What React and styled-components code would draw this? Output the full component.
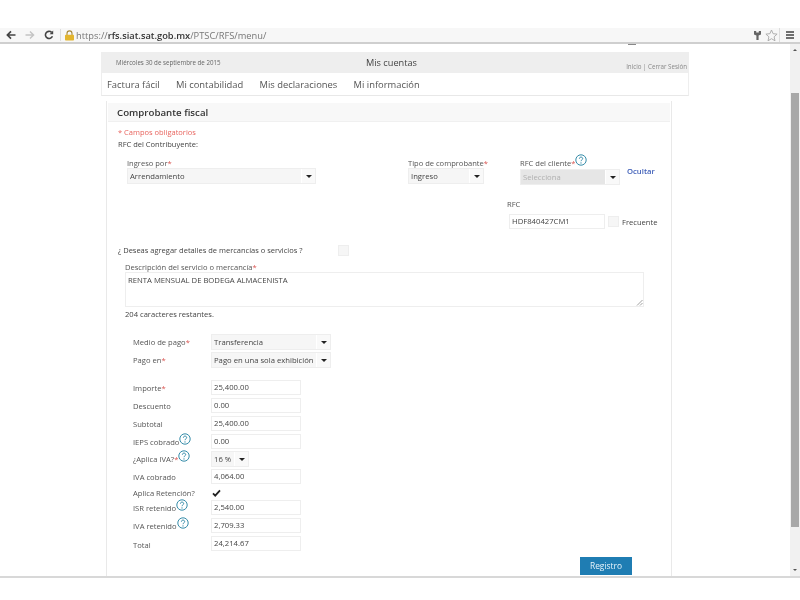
import React from "react";
import styled, { createGlobalStyle } from "styled-components";

const GlobalStyle = createGlobalStyle`
  html, body { margin: 0; padding: 0; background: #fff; overflow: hidden; }
  * { box-sizing: border-box; }
`;

const HelpIcon = ({ size = 12 }) => (
  <HelpSvg width={size} height={size} viewBox="0 0 12 12">
    <circle cx="6" cy="6" r="5.2" fill="none" stroke="#1f7f9f" strokeWidth="0.9" />
    <path d="M4.4 4.7c0-1 .7-1.6 1.6-1.6s1.7.6 1.7 1.5c0 1.2-1.7 1.3-1.7 2.6" fill="none" stroke="#1f7f9f" strokeWidth="0.9" />
    <circle cx="6" cy="8.9" r="0.6" fill="#1f7f9f" />
  </HelpSvg>
);

const SelectBox = ({ width, height = 16, disabled, children }) => (
  <Select $width={width} $height={height} $disabled={disabled}>
    <SelectValue $disabled={disabled}>{children}</SelectValue>
    <SelectArrow />
  </Select>
);

const AmountRow = ({ label, required, help, value, gap = 3, drop }) => (
  <Row $gap={gap}>
    <RowLabel $drop={drop}>
      {label}
      {required && <Req>*</Req>}
      {help && <HelpIcon />}
    </RowLabel>
    <Input $width={90}>{value}</Input>
  </Row>
);

const App = () => {
  return (
    <Page>
      <GlobalStyle />
      <TopBlank />
      <Toolbar>
        <NavIcons>
          <svg width="10" height="10" viewBox="0 0 10 10">
            <path d="M9.5 5H2M5 1.4 1.4 5 5 8.6" fill="none" stroke="#444" strokeWidth="1.7" />
          </svg>
          <svg width="10" height="10" viewBox="0 0 10 10">
            <path d="M.5 5H8M5 1.4 8.6 5 5 8.6" fill="none" stroke="#c4c4c4" strokeWidth="1.4" />
          </svg>
          <svg width="10" height="10" viewBox="0 0 10 10">
            <path d="M8.4 6.2A3.6 3.6 0 1 1 7.6 2.4" fill="none" stroke="#444" strokeWidth="1.6" />
            <path d="M9.2 .6v3.6H5.6z" fill="#444" />
          </svg>
        </NavIcons>
        <ToolbarDivider />
        <svg width="11" height="11" viewBox="0 0 11 11">
          <path d="M3 5V3.4a2.5 2.5 0 0 1 5 0V5" fill="none" stroke="#a88a3a" strokeWidth="1.1" />
          <rect x="1" y="4.8" width="9" height="5.8" rx="0.8" fill="#e3b52e" />
        </svg>
        <Url>
          https://<strong>rfs.siat.sat.gob.mx</strong>/PTSC/RFS/menu/
        </Url>
        <ToolbarRight>
          <svg width="9" height="11" viewBox="0 0 9 11">
            <path d="M1 1h2.2v1.4h2.6V1H8v3.4L5.6 5.6V10H3.4V5.6L1 4.4z" fill="#666" />
          </svg>
          <StarIcon width="13" height="13" viewBox="0 0 13 13">
            <path d="M6.5 1 8.1 4.7l4 .4-3 2.7.9 4-3.5-2.1-3.5 2.1.9-4-3-2.7 4-.4z" fill="none" stroke="#a8a8a8" strokeWidth="0.9" />
          </StarIcon>
          <MenuDivider />
          <svg width="8" height="8" viewBox="0 0 8 8">
            <path d="M0 1h8M0 4h8M0 7h8" stroke="#444" strokeWidth="1.5" />
          </svg>
        </ToolbarRight>
      </Toolbar>

      <Viewport>
        <Main>
          <Header>
            <DateText>Miércoles 30 de septiembre de 2015</DateText>
            <HeaderTitle>Mis cuentas</HeaderTitle>
            <SessionLinks>Inicio | Cerrar Sesión</SessionLinks>
          </Header>
          <Nav>
            <NavItem>Factura fácil</NavItem>
            <NavItem>Mi contabilidad</NavItem>
            <NavItem>Mis declaraciones</NavItem>
            <NavItem>Mi información</NavItem>
          </Nav>

          <Card>
            <CardTitle>Comprobante fiscal</CardTitle>
            <Body>
              <Required>* Campos obligatorios</Required>
              <Taxpayer>RFC del Contribuyente:</Taxpayer>

              <TopFields>
                <Field $width={281}>
                  <FieldLabel>
                    Ingreso por<Req>*</Req>
                  </FieldLabel>
                  <SelectBox width={189}>Arrendamiento</SelectBox>
                </Field>
                <Field $width={112}>
                  <FieldLabel>
                    Tipo de comprobante<Req>*</Req>
                  </FieldLabel>
                  <SelectBox width={76}>Ingreso</SelectBox>
                </Field>
                <ClientField $width={107}>
                  <FieldLabel>
                    RFC del cliente<Req>*</Req>
                    <HelpIcon />
                  </FieldLabel>
                  <SelectBox width={100} disabled>
                    Selecciona
                  </SelectBox>
                </ClientField>
                <HideLink>Ocultar</HideLink>
              </TopFields>

              <ClientRfc>
                <ClientRfcLabel>RFC</ClientRfcLabel>
                <ClientRfcRow>
                  <Input $width={96}>HDF840427CM1</Input>
                  <CheckBox />
                  <span>Frecuente</span>
                </ClientRfcRow>
              </ClientRfc>

              <DetailsRow>
                <DetailsText>¿ Deseas agregar detalles de mercancías o servicios ?</DetailsText>
                <CheckBox />
              </DetailsRow>

              <Description>
                <FieldLabel>
                  Descripción del servicio o mercancía<Req>*</Req>
                </FieldLabel>
                <TextArea>
                  RENTA MENSUAL DE BODEGA ALMACENISTA
                  <Grip width="7" height="7" viewBox="0 0 7 7">
                    <path d="M1 6.5 6.5 1M4 6.5 6.5 4" stroke="#888" strokeWidth="0.8" />
                  </Grip>
                </TextArea>
                <Remaining>204 caracteres restantes.</Remaining>
              </Description>

              <Amounts>
                <Row $gap={0}>
                  <RowLabel>
                    Medio de pago<Req>*</Req>
                  </RowLabel>
                  <SelectBox width={120}>Transferencia</SelectBox>
                </Row>
                <Row $gap={2}>
                  <RowLabel>
                    Pago en<Req>*</Req>
                  </RowLabel>
                  <SelectBox width={120}>Pago en una sola exhibición</SelectBox>
                </Row>
                <AmountRow label="Importe" required value="25,400.00" gap={12} />
                <AmountRow label="Descuento" value="0.00" />
                <AmountRow label="Subtotal" value="25,400.00" />
                <AmountRow label="IEPS cobrado" help value="0.00" />
                <Row $gap={2}>
                  <RowLabel>
                    ¿Aplica IVA?<Req>*</Req>
                    <HelpIcon />
                  </RowLabel>
                  <SelectBox width={38}>16 %</SelectBox>
                </Row>
                <AmountRow label="IVA cobrado" value="4,064.00" gap={2} />
                <Row $gap={2} $height={14}>
                  <RowLabel>Aplica Retención?</RowLabel>
                  <CheckMark>
                    <svg width="9" height="8" viewBox="0 0 9 8">
                      <path d="M1 4.4 3.2 6.6 8 1.4" fill="none" stroke="#222" strokeWidth="1.8" />
                    </svg>
                  </CheckMark>
                </Row>
                <AmountRow label="ISR retenido" help value="2,540.00" gap={0} />
                <AmountRow label="IVA retenido" help value="2,709.33" />
                <AmountRow label="Total" value="24,214.67" drop />
              </Amounts>

              <Actions>
                <SubmitButton>Registro</SubmitButton>
              </Actions>
            </Body>
          </Card>
        </Main>

        <Scrollbar>
          <ScrollArrow $up />
          <ScrollTrack>
            <ScrollThumb />
          </ScrollTrack>
          <ScrollArrow />
        </Scrollbar>
      </Viewport>
      <BottomLine />
    </Page>
  );
};

export default App;

// Styled Components
const Page = styled.div`
  width: 800px;
  height: 600px;
  display: flex;
  flex-direction: column;
  overflow: hidden;
  background: #fff;
  color: #444;
  font-family: "Open Sans", "Liberation Sans", sans-serif;
  font-size: 8px;
  filter: blur(0.35px);
`;

const TopBlank = styled.div`
  height: 28px;
  flex: none;
`;

const Toolbar = styled.div`
  position: relative;
  height: 16px;
  flex: none;
  display: flex;
  align-items: center;
  padding: 0 6px;
  background: #f7f7f7;
  border-bottom: 2px solid #cfcfcf;

  /* small tab mark that pokes out under the toolbar */
  &::after {
    content: "";
    position: absolute;
    left: 628px;
    bottom: -3px;
    width: 8px;
    height: 1px;
    background: #888;
  }
`;

const NavIcons = styled.div`
  display: flex;
  align-items: center;
  gap: 9px;
`;

const ToolbarDivider = styled.div`
  width: 1px;
  height: 12px;
  margin: 0 3px 0 6px;
  background: #ddd;
`;

const Url = styled.div`
  margin-left: 1px;
  font-size: 9.3px;
  color: #777;
  white-space: nowrap;

  strong {
    font-weight: 600;
    color: #333;
  }
`;

const ToolbarRight = styled.div`
  margin-left: auto;
  display: flex;
  align-items: center;
`;

const StarIcon = styled.svg`
  margin-left: 3px;
`;

const MenuDivider = styled.div`
  width: 1px;
  height: 14px;
  margin: 0 6px 0 1px;
  background: #ddd;
`;

const Viewport = styled.div`
  flex: none;
  height: 532px;
  display: flex;
`;

const Main = styled.div`
  width: 790px;
  padding: 8px 0 0 101px;
  overflow: hidden;
`;

const Header = styled.div`
  width: 588px;
  height: 21px;
  display: flex;
  background: #eee;
`;

const DateText = styled.div`
  width: 224px;
  padding: 6px 0 0 15px;
  font-size: 6.2px;
  color: #666;
`;

const HeaderTitle = styled.div`
  width: 145px;
  padding: 4px 0 0 41px;
  font-size: 9.2px;
  color: #444;
`;

const SessionLinks = styled.div`
  flex: 1;
  padding: 10px 2px 0 0;
  text-align: right;
  font-size: 6.2px;
  white-space: nowrap;
  color: #888;
`;

const Nav = styled.div`
  width: 588px;
  height: 23px;
  display: flex;
  align-items: center;
  gap: 16.3px;
  padding-left: 5px;
  background: #fff;
  border-bottom: 1px solid #e8e8e8;
  border-right: 1px solid #eee;
  border-left: 1px solid #eee;
`;

const NavItem = styled.div`
  font-size: 9.4px;
  color: #555;
`;

const Card = styled.div`
  width: 566px;
  height: 480px;
  margin: 5px 0 0 5px;
  padding: 2px 1px 0;
  border-left: 1px solid #e9e9e9;
  border-right: 1px solid #e9e9e9;
`;

const CardTitle = styled.div`
  height: 19px;
  width: 562px;
  padding: 3px 0 0 9px;
  background: #f8f8f8;
  font-size: 9.7px;
  font-weight: 600;
  color: #333;
  border-bottom: 1px solid #f0f0f0;
`;

const Body = styled.div`
  padding: 5px 0 0 10px;
`;

const Required = styled.div`
  height: 12px;
  font-size: 7.5px;
  color: #e8655f;
`;

const Taxpayer = styled.div`
  height: 12px;
  font-size: 7.5px;
  color: #444;
`;

const TopFields = styled.div`
  display: flex;
  height: 34px;
  margin: 6px 0 0 9px;
`;

const Field = styled.div`
  width: ${(p) => p.$width}px;
  flex: none;
`;

const ClientField = styled(Field)`
  & > div:last-child {
    margin-top: 1px;
  }
`;

const FieldLabel = styled.div`
  height: 11px;
  font-size: 7.55px;
  line-height: 12px;
  white-space: nowrap;
  color: #555;
`;

const Req = styled.span`
  color: #d9534f;
`;

const HelpSvg = styled.svg`
  margin: -9px 0 0 0;
  vertical-align: 0;
`;

const Select = styled.div`
  width: ${(p) => p.$width}px;
  height: ${(p) => p.$height}px;
  display: flex;
  background: ${(p) => (p.$disabled ? "#e6e6e6" : "#f6f6f6")};
  border: 1px solid #eee;
`;

const SelectValue = styled.div`
  flex: 1;
  padding-left: 2px;
  line-height: 14px;
  font-size: 7.7px;
  white-space: nowrap;
  overflow: hidden;
  color: ${(p) => (p.$disabled ? "#b0b0b0" : "#444")};
`;

const SelectArrow = styled.div`
  width: 14px;
  flex: none;
  display: flex;
  align-items: center;
  justify-content: center;
  background: #f9f9f9;
  border-left: 1px solid #fff;

  &::after {
    content: "";
    border-left: 3px solid transparent;
    border-right: 3px solid transparent;
    border-top: 3px solid #222;
  }
`;

const HideLink = styled.div`
  margin-top: 9px;
  font-size: 7.7px;
  font-weight: 600;
  color: #3f5fb8;
`;

const ClientRfc = styled.div`
  margin: 8px 0 0 389px;
`;

const ClientRfcLabel = styled.div`
  height: 15px;
  font-size: 7.6px;
  color: #555;
`;

const ClientRfcRow = styled.div`
  display: flex;
  align-items: center;
  gap: 3px;
  margin-left: 2px;
  font-size: 7.6px;
`;

const Input = styled.div`
  width: ${(p) => p.$width}px;
  height: 15px;
  flex: none;
  padding-left: 2px;
  border: 1px solid #eee;
  background: #fff;
  font-size: 7.7px;
  line-height: 13px;
  color: #444;
`;

const CheckBox = styled.div`
  width: 11px;
  height: 11px;
  flex: none;
  background: #f6f6f6;
  border: 1px solid #eee;
`;

const DetailsRow = styled.div`
  display: flex;
  align-items: center;
  height: 12px;
  margin-top: 15px;
`;

const DetailsText = styled.div`
  width: 220px;
  font-size: 7.5px;
  white-space: nowrap;
  color: #444;
`;

const Description = styled.div`
  margin: 5px 0 0 7px;
`;

const TextArea = styled.div`
  position: relative;
  width: 519px;
  height: 35px;
  padding: 2px 2px 0;
  border: 1px solid #eee;
  font-size: 7.7px;
  line-height: 11px;
  color: #444;
`;

const Grip = styled.svg`
  position: absolute;
  right: 0;
  bottom: 0;
`;

const Remaining = styled.div`
  margin-top: 2px;
  font-size: 7.6px;
  color: #444;
`;

const Amounts = styled.div`
  margin: 15px 0 0 15px;
`;

const Row = styled.div`
  display: flex;
  align-items: center;
  height: ${(p) => (p.$height ? `${p.$height}px` : "auto")};
  margin-top: ${(p) => p.$gap}px;
`;

const RowLabel = styled.div`
  width: 78px;
  flex: none;
  padding-top: ${(p) => (p.$drop ? 3 : 0)}px;
  font-size: 7.6px;
  white-space: nowrap;
  color: #555;
`;

const CheckMark = styled.div`
  display: flex;
  padding-left: 1px;
`;

const Actions = styled.div`
  margin: 6px 0 0 462px;
`;

const SubmitButton = styled.div`
  width: 52px;
  height: 18px;
  text-align: center;
  line-height: 17px;
  font-size: 8.4px;
  color: #e8f4fb;
  background: #1f7db3;
`;

const Scrollbar = styled.div`
  width: 10px;
  flex: none;
  display: flex;
  flex-direction: column;
  background: #f1f1f1;
`;

const ScrollArrow = styled.div`
  height: 49px;
  display: flex;
  justify-content: center;
  align-items: ${(p) => (p.$up ? "flex-start" : "flex-end")};
  padding: 5px 0;

  &::after {
    content: "";
    border-left: 2px solid transparent;
    border-right: 2px solid transparent;
    ${(p) => (p.$up ? "border-bottom: 2px solid #555;" : "border-top: 2px solid #555;")}
  }
`;

const ScrollTrack = styled.div`
  flex: 1;
  display: flex;
  justify-content: center;
`;

const ScrollThumb = styled.div`
  width: 8px;
  height: 434px;
  background: #a8a8a8;
`;

const BottomLine = styled.div`
  height: 2px;
  flex: none;
  background: #d8d8d8;
`;
